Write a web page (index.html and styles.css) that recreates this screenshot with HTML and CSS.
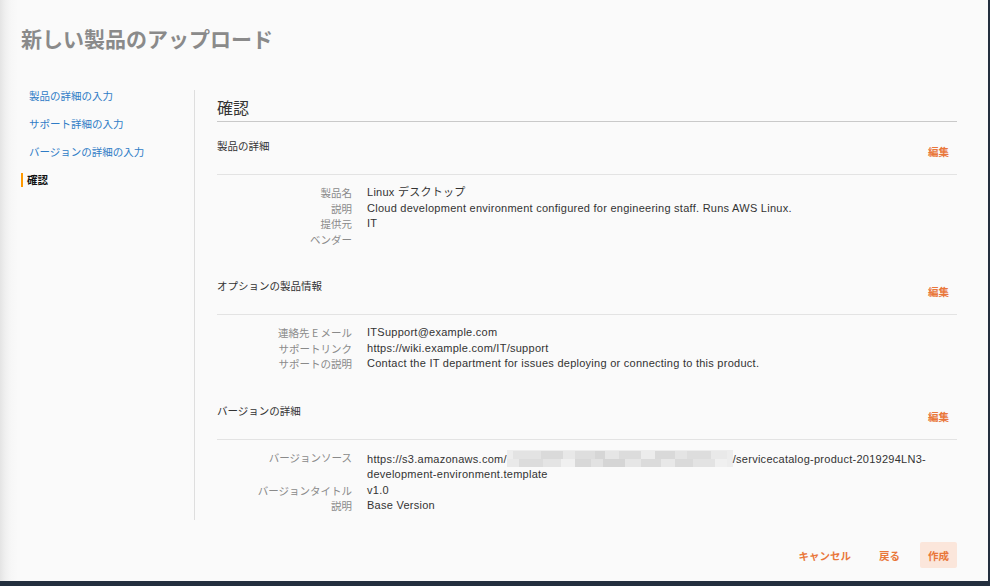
FILE: index.html
```html
<!DOCTYPE html>
<html lang="ja">
<head>
<meta charset="utf-8">
<title>新しい製品のアップロード</title>
<link rel="stylesheet" href="styles.css">
</head>
<body>
<div class="page">
  <div class="frame">
    <h1 class="title">新しい製品のアップロード</h1>
    <div class="layout">
      <nav class="sidebar">
        <a class="step">製品の詳細の入力</a>
        <a class="step">サポート詳細の入力</a>
        <a class="step">バージョンの詳細の入力</a>
        <span class="step active">確認</span>
      </nav>
      <main class="main">
        <h2 class="heading">確認</h2>

        <section class="section">
          <div class="section-head">
            <span class="section-title">製品の詳細</span>
            <a class="edit">編集</a>
          </div>
          <dl class="rows">
            <dt>製品名</dt><dd>Linux デスクトップ</dd>
            <dt>説明</dt><dd>Cloud development environment configured for engineering staff. Runs AWS Linux.</dd>
            <dt>提供元</dt><dd>IT</dd>
            <dt>ベンダー</dt><dd></dd>
          </dl>
        </section>

        <section class="section">
          <div class="section-head">
            <span class="section-title">オプションの製品情報</span>
            <a class="edit">編集</a>
          </div>
          <dl class="rows">
            <dt>連絡先 E メール</dt><dd>ITSupport@example.com</dd>
            <dt>サポートリンク</dt><dd>https://wiki.example.com/IT/support</dd>
            <dt>サポートの説明</dt><dd>Contact the IT department for issues deploying or connecting to this product.</dd>
          </dl>
        </section>

        <section class="section">
          <div class="section-head">
            <span class="section-title">バージョンの詳細</span>
            <a class="edit">編集</a>
          </div>
          <dl class="rows">
            <dt>バージョンソース</dt><dd>https://s3.amazonaws.com/<svg class="blur" width="226" height="17" viewBox="0 0 226 17" aria-hidden="true">
              <rect x="0" y="0" width="226" height="17" fill="#ededed"/>
              <rect x="6" y="1" width="28" height="8" fill="#e3e3e3"/>
              <rect x="34" y="1" width="22" height="8" fill="#dadada"/>
              <rect x="56" y="1" width="12" height="8" fill="#e8e8e8"/>
              <rect x="68" y="1" width="20" height="8" fill="#dedede"/>
              <rect x="88" y="1" width="10" height="8" fill="#d6d6d6"/>
              <rect x="98" y="1" width="14" height="8" fill="#e6e6e6"/>
              <rect x="112" y="1" width="22" height="8" fill="#dcdcdc"/>
              <rect x="134" y="1" width="14" height="8" fill="#ececec"/>
              <rect x="148" y="1" width="20" height="8" fill="#d9d9d9"/>
              <rect x="168" y="1" width="12" height="8" fill="#e4e4e4"/>
              <rect x="180" y="1" width="24" height="8" fill="#dddddd"/>
              <rect x="204" y="1" width="16" height="8" fill="#e9e9e9"/>
              <rect x="0" y="9" width="12" height="8" fill="#e9e9e9"/>
              <rect x="12" y="9" width="24" height="8" fill="#dcdcdc"/>
              <rect x="36" y="9" width="18" height="8" fill="#e4e4e4"/>
              <rect x="54" y="9" width="14" height="8" fill="#f0f0f0"/>
              <rect x="68" y="9" width="16" height="8" fill="#d8d8d8"/>
              <rect x="84" y="9" width="12" height="8" fill="#e2e2e2"/>
              <rect x="96" y="9" width="22" height="8" fill="#d5d5d5"/>
              <rect x="118" y="9" width="16" height="8" fill="#e6e6e6"/>
              <rect x="134" y="9" width="20" height="8" fill="#dbdbdb"/>
              <rect x="154" y="9" width="14" height="8" fill="#e8e8e8"/>
              <rect x="168" y="9" width="18" height="8" fill="#dadada"/>
              <rect x="186" y="9" width="22" height="8" fill="#e3e3e3"/>
              <rect x="208" y="9" width="12" height="8" fill="#f0f0f0"/>
            </svg>/servicecatalog-product-2019294LN3-<br>development-environment.template</dd>
            <dt>バージョンタイトル</dt><dd>v1.0</dd>
            <dt>説明</dt><dd>Base Version</dd>
          </dl>
        </section>
      </main>
    </div>
    <div class="actions">
      <button class="btn">キャンセル</button>
      <button class="btn">戻る</button>
      <button class="btn primary">作成</button>
    </div>
  </div>
  <div class="bottom-bar"></div>
</div>
</body>
</html>
```

FILE: styles.css
```css
html, body {
  margin: 0;
  padding: 0;
}

body {
  width: 990px;
  height: 586px;
  overflow: hidden;
  font-family: "Liberation Sans", "Noto Sans CJK JP", sans-serif;
  color: #333;
  background: #fafafa;
}

.page {
  display: flex;
  flex-direction: column;
  height: 586px;
}

.frame {
  flex: 1;
  display: flex;
  flex-direction: column;
  border-right: 2px solid #232f3e;
  background: linear-gradient(to right, #e4e4e4 0, #efefef 5px, #f7f7f7 11px, #fafafa 18px);
  padding-top: 24px;
}

.title {
  margin: 0 0 36px 21px;
  font-family: "Noto Sans CJK JP", sans-serif;
  font-size: 21px;
  line-height: 28px;
  font-weight: 700;
  color: #8a8a8a;
  letter-spacing: 0;
}

.layout {
  display: flex;
  height: 432px;
}

.sidebar {
  width: 173px;
  padding-left: 21px;
  display: flex;
  flex-direction: column;
  gap: 12px;
}

.step {
  display: block;
  padding-left: 6px;
  font-family: "Noto Sans CJK JP", sans-serif;
  font-size: 10.5px;
  line-height: 16px;
  color: #2f7cc6;
  text-decoration: none;
  border-left: 2px solid transparent;
}

.step.active {
  color: #111;
  font-weight: 700;
  border-left-color: #ff9900;
  padding-left: 4px;
  line-height: 14px;
  margin-top: 1px;
}

.main {
  flex: 1;
  margin-top: 2px;
  border-left: 1px solid #dedede;
  padding: 6px 31px 0 22px;
}

.heading {
  margin: 0;
  font-family: "Noto Sans CJK JP", sans-serif;
  font-size: 16px;
  line-height: 22px;
  font-weight: 400;
  color: #333;
  padding-bottom: 3px;
  border-bottom: 1px solid #c9c9c9;
}

.section {
  padding-top: 16px;
}

.section + .section {
  padding-top: 31px;
}

.section-head {
  display: flex;
  justify-content: space-between;
  align-items: flex-start;
  padding-bottom: 14px;
  border-bottom: 1px solid #e3e3e3;
}

.section-title {
  font-family: "Noto Sans CJK JP", sans-serif;
  font-size: 10.5px;
  line-height: 16px;
  color: #333;
}

.edit {
  margin-top: 6px;
  margin-right: 8px;
  font-family: "Noto Sans CJK JP", sans-serif;
  font-size: 10.5px;
  line-height: 16px;
  font-weight: 700;
  color: #e9773a;
  cursor: pointer;
}

.rows {
  display: grid;
  grid-template-columns: 135px 1fr;
  column-gap: 15px;
  margin: 10px 0 0;
  font-size: 11px;
  line-height: 15.5px;
}

.rows dt {
  text-align: right;
  color: #8a8a8a;
  font-family: "Noto Sans CJK JP", sans-serif;
  font-size: 10.5px;
}

.rows dd {
  margin: 0;
  color: #333;
  min-height: 15.5px;
  letter-spacing: 0.26px;
}

.blur {
  display: inline-block;
  vertical-align: -4px;
}

.actions {
  display: flex;
  justify-content: flex-end;
  gap: 12px;
  margin-top: 22px;
  padding-right: 31px;
}

.btn {
  height: 26px;
  padding: 0 8px;
  border: 0;
  border-radius: 2px;
  background: transparent;
  font-family: "Noto Sans CJK JP", sans-serif;
  font-size: 10.5px;
  font-weight: 700;
  color: #e9773a;
  cursor: pointer;
}

.btn.primary {
  background: #fbe6db;
}

.bottom-bar {
  height: 5px;
  background: #232f3e;
}
```
